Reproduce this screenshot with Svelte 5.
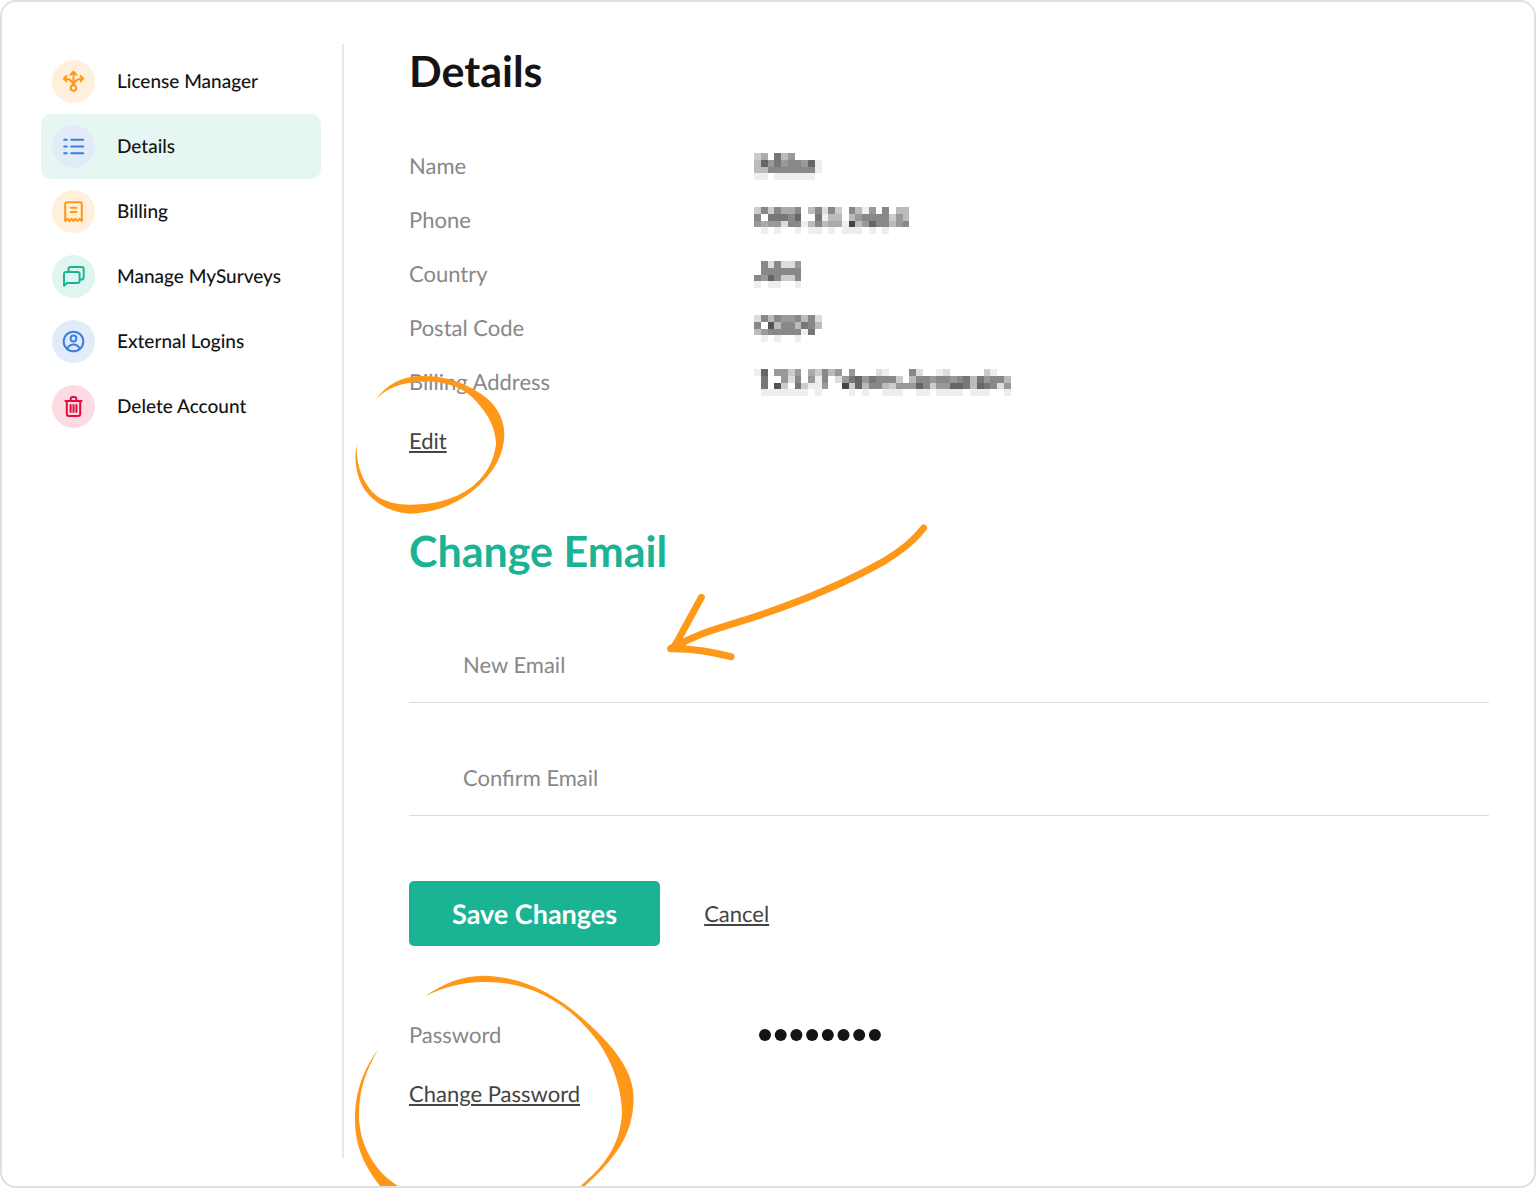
<!-- Account page: section menu on the left, personal details, email form and
     password on the right, with hand-drawn highlights over the key actions. -->
<script lang="ts">
  type Detail = { label: string; mask: string[] };

  const menu = [
    { id: "license", label: "License Manager", tone: "orange" },
    { id: "details", label: "Details", tone: "blue" },
    { id: "billing", label: "Billing", tone: "orange" },
    { id: "surveys", label: "Manage MySurveys", tone: "green" },
    { id: "logins", label: "External Logins", tone: "blue" },
    { id: "delete", label: "Delete Account", tone: "red" },
  ];

  // Private values are shown as mosaics: one hex digit per cell, 0 black, f white.
  const details: Detail[] = [
    {
      label: "Name",
      mask: ["caf7b9ffff", "b69798896e", "bb8888888e", "eefeeeeeef"],
    },
    {
      label: "Phone",
      mask: [
        "c8c8aa8fb8d8cf8be9f8fbb",
        "8f77786ff7ebbfb98888c9b",
        "9a99d88eb8baae4b9688b98",
        "fefeffefeefefeeefefefff",
      ],
    },
    { label: "Country", mask: ["f8d8dd9", "f888888", "8968cc8", "efeeffe"] },
    {
      label: "Postal Code",
      mask: ["d8b8998b8d", "8f5b88b78b", "b988888e7f", "fefeffefff"],
    },
    {
      label: "Billing Address",
      mask: [
        "e6f99c9fac8b9f9fffdefff8dffedfffffceff",
        "f7ff9d8f9e8fd97697888cfb88988987b7988b",
        "f7f5cf7cee9ff4c6b88bc99968c99667b678d9",
        "feeeeeeefeffffefeffeeeffeefeeeefeeeffe",
      ],
    },
  ];

  let active = $state("details");
  let newEmail = $state("");
  let confirmEmail = $state("");

  function shade(digit: string) {
    return digit === "f" ? "none" : `#${digit.repeat(3)}`;
  }

  function reset() {
    newEmail = "";
    confirmEmail = "";
  }
</script>

{#snippet icon(id: string)}
  <svg class="icon" viewBox="-0.5 -0.5 25 25" aria-hidden="true">
    {#if id === "license"}
      <path d="M12 2.6V15.6M9 5.2l3-3 3 3M5 6.4 2.3 9.1 5 11.8M19 6.4l2.7 2.7-2.7 2.7M2.6 9.1c5 0 8.2 2 9.4 6.5 1.2-4.5 4.4-6.5 9.4-6.5" />
      <circle cx="12" cy="18.6" r="2.8" />
    {:else if id === "details"}
      <path d="M2.7 5.3h2.6M2.7 12h2.6M2.7 18.7h2.6M9.7 5.3h12M9.7 12h12M9.7 18.7h12" />
    {:else if id === "billing"}
      <path d="M3.7 21.4V4.4a1.7 1.7 0 0 1 1.7-1.7h13.2a1.7 1.7 0 0 1 1.7 1.7v17l-2.4-2.2-2 2.4-2-2.4-1.9 2.4-1.9-2.4-2 2.4-2-2.4z" />
      <path d="M9.3 8.2h5.6M9.3 12.4h5.6" />
    {:else if id === "surveys"}
      <path d="M2.5 21.2V9.4a2 2 0 0 1 2-2h11.6a2 2 0 0 1 2 2v7.2a2 2 0 0 1-2 2H5.6z" />
      <path d="M7 7.2V4.6a2 2 0 0 1 2-2h11.2a2 2 0 0 1 2 2v7.8a2.6 2.6 0 0 1-2.6 2.6h-1.2" />
    {:else if id === "logins"}
      <circle cx="12" cy="12" r="9.8" />
      <circle cx="12" cy="9" r="2.9" />
      <path d="M5.8 19.2C7 16.4 9.2 15 12 15s5 1.4 6.2 4.2" />
    {:else}
      <path d="M3.9 6.4h16.2M5.3 6.8v12.4a2.2 2.2 0 0 0 2.2 2.2h9a2.2 2.2 0 0 0 2.2-2.2V6.8M9.2 6V4.4a2 2 0 0 1 2-2h1.6a2 2 0 0 1 2 2V6" />
      <path d="M9.1 10.4v7.2M12 10.4v7.2M14.9 10.4v7.2" />
    {/if}
  </svg>
{/snippet}

{#snippet mosaic(rows: string[])}
  <svg class="mosaic" viewBox="0 0 {rows[0].length} 4" role="img" aria-label="Hidden">
    {#each rows as row, y}
      {#each row as digit, x}
        <rect {x} {y} width="1" height="1" fill={shade(digit)} />
      {/each}
    {/each}
  </svg>
{/snippet}

<div class="frame">
  <nav class="sidebar" aria-label="Account">
    {#each menu as item}
      <a
        class="item"
        class:active={active === item.id}
        href="#{item.id}"
        onclick={() => (active = item.id)}
      >
        <span class="badge {item.tone}">{@render icon(item.id)}</span>
        {item.label}
      </a>
    {/each}
  </nav>

  <main>
    <section class="details">
      <h1>Details</h1>
      <dl>
        {#each details as detail}
          <div class="row">
            <dt>{detail.label}</dt>
            <dd>{@render mosaic(detail.mask)}</dd>
          </div>
        {/each}
      </dl>
      <div class="action">
        <a href="#edit">Edit</a>
        <svg class="mark ring-small" viewBox="45 75 450 420" aria-hidden="true">
          <path d="M107 148C144 100 190 77 250 78C310 78 370 95 420 130C475 165 494 215 493 257C490 330 445 385 395 425C340 468 270 490 210 491C150 488 95 455 68 410C45 365 43 325 50 280C48 330 60 375 85 410C110 450 160 465 215 464C280 464 340 450 390 415C445 375 465 320 468 280C465 225 440 190 410 155C370 110 310 92 245 95C180 97 140 115 107 148Z" />
        </svg>
      </div>
    </section>

    <section class="email">
      <h2>Change Email</h2>
      <svg class="mark arrow" viewBox="45 30 810 435" aria-hidden="true">
        <path d="M821 54C790 95 750 125 700 155C580 222 440 280 300 325C200 357 150 367 72 412" />
        <path d="M154 262 72 412M62 416C130 415 180 425 243 440" />
        <path d="M64 415 88 398 98 410Z" />
      </svg>
      <form onsubmit={(e) => e.preventDefault()}>
        <input type="email" placeholder="New Email" aria-label="New Email" bind:value={newEmail} />
        <input type="email" placeholder="Confirm Email" aria-label="Confirm Email" bind:value={confirmEmail} />
        <div class="buttons">
          <button class="save" type="submit">Save Changes</button>
          <button class="cancel" type="button" onclick={reset}>Cancel</button>
        </div>
      </form>
    </section>

    <section class="password">
      <dl>
        <div class="row">
          <dt>Password</dt>
          <dd>
            <svg class="dots" viewBox="0 0 122 12" role="img" aria-label="Hidden">
              {#each { length: 8 } as _, i}
                <circle cx={6 + i * 15.7} cy="6" r="6" />
              {/each}
            </svg>
          </dd>
        </div>
      </dl>
      <div class="action">
        <a href="#password">Change Password</a>
        <svg class="mark ring-large" viewBox="45 45 840 660" aria-hidden="true">
          <path d="M255 109C310 70 365 48 430 47C560 50 660 110 750 195C830 270 882 340 881 415C880 530 820 600 735 678L700 705L690 705L722 678C790 620 840 560 846 460C845 380 815 300 770 240C680 120 560 65 435 66C365 66 305 83 255 109Z" />
          <path d="M114 268C60 345 45 410 45 480C45 560 75 620 120 678L145 705L230 705L175 678C110 640 57 560 57 465C57 385 80 330 114 268Z" />
        </svg>
      </div>
    </section>
  </main>
</div>

<style>
  :global(body) {
    margin: 0;
    background: #fff;
  }
  .frame {
    position: relative;
    display: flex;
    box-sizing: border-box;
    min-height: 100vh;
    padding: 42px 45px 28px 39px;
    border: 2px solid #e0e0e0;
    border-radius: 16px;
    overflow: hidden;
    font-family: Lato, sans-serif;
    text-rendering: geometricPrecision;
    color: #141414;
  }
  .sidebar {
    flex: 0 0 280px;
    padding: 5px 21px 0 0;
    border-right: 2px solid #e8e8e8;
  }
  .item {
    display: flex;
    align-items: center;
    gap: 22px;
    height: 65px;
    padding-left: 11px;
    border-radius: 10px;
    font-size: 19px;
    font-weight: 500;
    color: inherit;
    text-decoration: none;
  }
  .item.active {
    background: #e6f6f3;
  }
  .badge {
    display: grid;
    place-items: center;
    width: 43px;
    height: 43px;
    border-radius: 50%;
  }
  .orange {
    background: #fff0dc;
    color: #ff9818;
  }
  .blue {
    background: #e2ecf9;
    color: #3d7fe0;
  }
  .green {
    background: #dff5ee;
    color: #1ab394;
  }
  .red {
    background: #fcdbe2;
    color: #ea0840;
  }
  .icon {
    width: 25px;
    height: 25px;
    fill: none;
    stroke: currentColor;
    stroke-width: 2;
    stroke-linecap: round;
    stroke-linejoin: round;
  }
  main {
    flex: 1;
    min-width: 0;
    padding-left: 65px;
  }
  section {
    position: relative;
  }
  h1,
  h2 {
    margin: 0;
    font-size: 43px;
    line-height: 56px;
    font-weight: 700;
  }
  h2 {
    color: #1ab394;
  }
  dl {
    margin: 0;
  }
  .details dl {
    margin-top: 38px;
  }
  .row {
    display: grid;
    grid-template-columns: 345px 1fr;
    align-items: center;
    height: 54px;
    font-size: 22px;
  }
  dt {
    color: #888;
  }
  dd {
    margin: 0;
    padding-top: 2px;
  }
  .mosaic {
    display: block;
    height: 27px;
    shape-rendering: crispEdges;
  }
  .dots {
    display: block;
    width: 122px;
    height: 12px;
    margin-left: 5px;
    fill: #141414;
  }
  .action {
    position: relative;
    margin-top: 6px;
    font-size: 22px;
    line-height: 54px;
  }
  .action a,
  .cancel {
    color: #444;
    text-decoration: underline;
  }
  .email {
    margin-top: 56px;
  }
  form {
    margin-top: 48px;
  }
  input {
    display: block;
    box-sizing: border-box;
    width: 100%;
    height: 75px;
    margin-bottom: 38px;
    padding: 0 54px 2px;
    border: 0;
    border-bottom: 1px solid #dcdcdc;
    background: none;
    font: inherit;
    font-size: 22px;
    text-rendering: inherit;
    color: inherit;
  }
  input::placeholder {
    color: #888;
    opacity: 1;
  }
  .buttons {
    display: flex;
    align-items: center;
    gap: 44px;
    margin-top: 65px;
  }
  button {
    padding: 0;
    border: 0;
    background: none;
    font: inherit;
    text-rendering: inherit;
    cursor: pointer;
  }
  .save {
    height: 65px;
    padding: 0 43px;
    border-radius: 5px;
    background: #1ab394;
    color: #fff;
    font-size: 27px;
    font-weight: 700;
  }
  .cancel {
    font-size: 22px;
  }
  .password {
    margin-top: 61px;
  }
  .mark {
    position: absolute;
    fill: #ff9818;
    pointer-events: none;
  }
  .ring-small {
    left: -54px;
    top: -39px;
    width: 150px;
    height: 140px;
  }
  .arrow {
    left: 256px;
    top: -4px;
    width: 270px;
    height: 145px;
    fill: none;
    stroke: #ff9818;
    stroke-width: 21;
    stroke-linecap: round;
    stroke-linejoin: round;
  }
  .ring-large {
    left: -54px;
    top: -92px;
    width: 280px;
    height: 220px;
  }
</style>
